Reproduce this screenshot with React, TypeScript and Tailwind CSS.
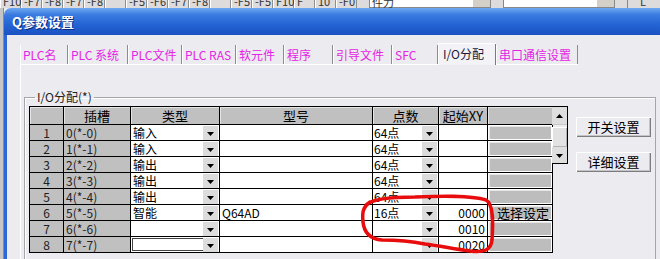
import React from "react";

type Row = {
  no: number;
  slot: string;
  type: string;
  model: string;
  points: string;
  xy: string;
  detail: string;
  focus?: boolean;
};

const ROWS: Row[] = [
  { no: 1, slot: "0(*-0)", type: "输入", model: "", points: "64点", xy: "", detail: "" },
  { no: 2, slot: "1(*-1)", type: "输入", model: "", points: "64点", xy: "", detail: "" },
  { no: 3, slot: "2(*-2)", type: "输出", model: "", points: "64点", xy: "", detail: "" },
  { no: 4, slot: "3(*-3)", type: "输出", model: "", points: "64点", xy: "", detail: "" },
  { no: 5, slot: "4(*-4)", type: "输出", model: "", points: "64点", xy: "", detail: "" },
  { no: 6, slot: "5(*-5)", type: "智能", model: "Q64AD", points: "16点", xy: "0000", detail: "选择设定" },
  { no: 7, slot: "6(*-6)", type: "", model: "", points: "", xy: "0010", detail: "" },
  { no: 8, slot: "7(*-7)", type: "", model: "", points: "", xy: "0020", detail: "", focus: true },
];

const TABS = [
  { label: "PLC名", w: "w-[48px]" },
  { label: "PLC 系统", w: "w-[60px]" },
  { label: "PLC文件", w: "w-[54px]" },
  { label: "PLC RAS", w: "w-[54px]" },
  { label: "软元件", w: "w-[48px]" },
  { label: "程序", w: "w-[49px]" },
  { label: "引导文件", w: "w-[59px]" },
  { label: "SFC", w: "w-[46px]" },
  { label: "I/O分配", w: "w-[58px]", active: true },
  { label: "串口通信设置", w: "w-[82px]" },
];

// toolbar of the window behind, only its lower edge shows
const TOP_KEYS = ["F10", "-F7", "-F8", "-F7", "-F8", "", "-F5", "-F6", "-F7", "-F8", "", "-F5", "-F5", "F10", "F", "10", "-F0"];

function Arrow({ up }: { up?: boolean }) {
  return (
    <svg width="7" height="4" viewBox="0 0 7 4">
      <path d={up ? "M0 4h7L3.5 0z" : "M0 0h7L3.5 4z"} fill="#000" />
    </svg>
  );
}

function Drop() {
  return (
    <span className="mr-[1px] ml-auto flex h-[14px] w-[15px] shrink-0 items-center justify-center bg-[#dcdcdc] pt-[3px]">
      <Arrow />
    </span>
  );
}

function TopStrip() {
  return (
    <div className="flex h-[8px] shrink-0 overflow-hidden bg-[#dddbdc]">
      <div className="-mt-[6px] flex h-[14px] items-stretch text-[11px] leading-[14px] text-[#333]">
        {TOP_KEYS.map((k, i) => (
          <span key={i} className="w-[21px] border-r border-[#8e8e8e] pl-[3px] shadow-[inset_1px_0_0_#fff]">
            {k}
          </span>
        ))}
        <span className="ml-[12px] flex w-[122px] border border-[#888] bg-white pl-[2px]">
          <span>件力</span>
          <span className="ml-auto w-[17px] bg-[#d4d0c8]" />
        </span>
        <span className="ml-[12px] flex w-[112px] border border-[#888] bg-white">
          <span className="ml-auto w-[17px] bg-[#d4d0c8]" />
        </span>
        <span className="ml-[12px] border-l border-[#888] pl-[12px]">L</span>
      </div>
    </div>
  );
}

function TableGrid() {
  const head =
    "flex h-[18px] items-center justify-center border-b border-r border-black bg-[#c0c0c0] text-[13px] shadow-[inset_1px_1px_0_#e4e4e4]";
  const cell = "flex h-[16px] items-center border-b border-r border-black";
  return (
    <div className="grid w-[523px] grid-cols-[34px_67px_89px_153px_66px_49px_65px] border-l border-t border-black text-[12px] leading-[14px]">
      <div className={head} />
      <div className={head}>插槽</div>
      <div className={head}>类型</div>
      <div className={head}>型号</div>
      <div className={head}>点数</div>
      <div className={head}>起始XY</div>
      <div className={head} />
      {ROWS.map((r) => (
        <React.Fragment key={r.no}>
          <div className={`${cell} justify-center bg-[#c0c0c0] text-[#222]`}>{r.no}</div>
          <div className={`${cell} bg-[#c0c0c0] pl-[2px] text-[#222]`}>{r.slot}</div>
          <div
            className={`${cell} bg-white pl-[2px] ${r.focus ? "shadow-[inset_0_0_0_1px_#fff,inset_0_0_0_2px_#444]" : ""}`}
          >
            <span>{r.type}</span>
            <Drop />
          </div>
          <div className={`${cell} bg-white pl-[2px]`}>{r.model}</div>
          <div className={`${cell} bg-white pl-[1px]`}>
            <span>{r.points}</span>
            <Drop />
          </div>
          <div className={`${cell} justify-end bg-white pr-[2px]`}>{r.xy}</div>
          <div className={`${cell} bg-white p-[1px]`}>
            <span className="flex h-full w-full items-center bg-[#bdbdbd] pl-[8px] text-[13px] shadow-[inset_1px_1px_0_#e6e6e6]">
              {r.detail}
            </span>
          </div>
        </React.Fragment>
      ))}
    </div>
  );
}

function ScrollBar() {
  return (
    <div className="flex w-[16px] flex-col border-y border-r border-black">
      <div className="flex h-[18px] items-center justify-center border-b border-[#c8c8c8] bg-[#dedede]">
        <Arrow up />
      </div>
      <div className="mt-[2px] h-[20px] bg-[#e2e2e2] shadow-[inset_1px_1px_0_#fff,inset_-1px_-1px_0_#b4b4b4]" />
      <div className="flex-1 bg-[repeating-conic-gradient(#d0d0d0_0_25%,#f4f4f4_0_50%)] bg-[length:2px_2px]" />
      <div className="flex h-[16px] items-center justify-center bg-[#dedede] pt-[2px]">
        <Arrow />
      </div>
    </div>
  );
}

function SideButton({ label }: { label: string }) {
  return (
    <button className="flex h-[20px] w-[75px] items-center justify-center bg-[#ecebf0] text-[13px] leading-[16px] text-black shadow-[inset_1px_1px_0_#fff,inset_-1px_-1px_0_#7d7d7d,inset_-2px_-2px_0_#c4c3c8]">
      {label}
    </button>
  );
}

export default function App() {
  return (
    <div className="relative flex h-[259px] w-[660px] flex-col overflow-hidden bg-[#ecebf0] font-['Noto_Sans_CJK_SC','Noto_Sans',sans-serif] text-[12px] text-black">
      <TopStrip />
      <div className="flex min-h-0 flex-1">
        <div className="w-[4px] border-r border-[#8a8a8a] bg-[#c6c6c6]" />
        <div className="flex flex-1 flex-col overflow-hidden rounded-tl-[7px]">
          <div className="flex h-[27px] shrink-0 items-center bg-[linear-gradient(180deg,#6ea8f2_0%,#3b7be0_25%,#2464d4_60%,#1b52c2_100%)] pl-[8px] text-[13px] font-bold text-white [text-shadow:1px_1px_0_#0a2a80]">
            Q参数设置
          </div>
          <div className="flex flex-1 flex-col border-l-[3px] border-[#2c66d8] bg-[#ecebf0] pl-[13px] pt-[8px]">
            <div className="flex h-[22px] items-end">
              {TABS.map((t) =>
                t.active ? (
                  <div
                    key={t.label}
                    className={`${t.w} flex h-[22px] items-center bg-[#f3f2f6] pb-[1px] pl-[5px] text-[#1a1a3a] shadow-[inset_1px_1px_0_#fff,inset_-1px_0_0_#7a7a7a]`}
                  >
                    {t.label}
                  </div>
                ) : (
                  <div
                    key={t.label}
                    className={`${t.w} flex h-[20px] items-center border-b border-white pl-[3px] text-[#e424e4] shadow-[inset_1px_0_0_#fff,inset_-1px_0_0_#8c8c8c]`}
                  >
                    {t.label}
                  </div>
                )
              )}
            </div>
            <div className="flex-1 border-l border-white pl-[3px] pt-[24px]">
              <fieldset className="w-[632px] border border-[#a6a5aa] pb-[10px] pl-[4px] pr-[3px] pt-[1px] shadow-[inset_1px_1px_0_#fff]">
                <legend className="ml-[6px] px-[2px] text-[12px] leading-[16px] text-[#222]">I/O分配(*)</legend>
                <div className="flex items-start">
                  <TableGrid />
                  <ScrollBar />
                  <div className="ml-[8px] flex flex-col gap-[15px] pt-[11px]">
                    <SideButton label="开关设置" />
                    <SideButton label="详细设置" />
                  </div>
                </div>
              </fieldset>
            </div>
          </div>
        </div>
      </div>
      <svg className="pointer-events-none absolute left-0 top-0" width="660" height="259" viewBox="0 0 660 259">
        <path
          d="M366 205 C372 199 390 197 415 197 C440 196 470 195 486 200 C494 204 493 225 492 240 C491 250 484 253 470 251 C455 249 440 246 425 244 C410 241 398 240 382 240 C370 239 364 232 363 222 C362 212 363 207 370 202"
          fill="none"
          stroke="#e80c0c"
          strokeWidth="3.5"
          strokeLinecap="round"
          strokeLinejoin="round"
        />
      </svg>
    </div>
  );
}
